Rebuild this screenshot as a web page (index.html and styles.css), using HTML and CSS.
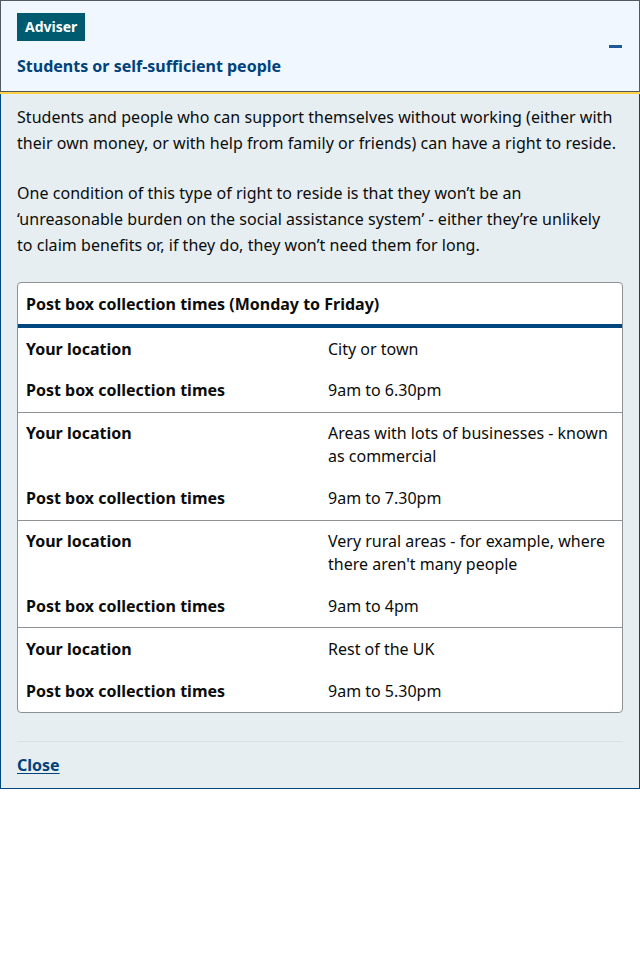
FILE: index.html
```html
<!DOCTYPE html>
<html lang="en">
<head>
<meta charset="utf-8">
<title>Students or self-sufficient people</title>
<link rel="stylesheet" href="styles.css">
</head>
<body>
<div class="panel">
  <div class="panel-header">
    <div class="header-text">
      <span class="badge">Adviser</span>
      <h2 class="title">Students or self-sufficient people</h2>
    </div>
    <span class="minus" aria-hidden="true"></span>
  </div>
  <div class="accent"></div>
  <div class="panel-body">
    <p class="para">Students and people who can support themselves without working (either with their own money, or with help from family or friends) can have a right to reside.</p>
    <p class="para">One condition of this type of right to reside is that they won’t be an ‘unreasonable burden on the social assistance system’ - either they’re unlikely to claim benefits or, if they do, they won’t need them for long.</p>
    <div class="table">
      <div class="table-caption">Post box collection times (Monday to Friday)</div>
      <div class="group">
        <div class="row"><div class="cell key">Your location</div><div class="cell">City or town</div></div>
        <div class="row"><div class="cell key">Post box collection times</div><div class="cell">9am to 6.30pm</div></div>
      </div>
      <div class="group">
        <div class="row"><div class="cell key">Your location</div><div class="cell">Areas with lots of businesses - known as commercial</div></div>
        <div class="row"><div class="cell key">Post box collection times</div><div class="cell">9am to 7.30pm</div></div>
      </div>
      <div class="group">
        <div class="row"><div class="cell key">Your location</div><div class="cell">Very rural areas - for example, where there aren't many people</div></div>
        <div class="row"><div class="cell key">Post box collection times</div><div class="cell">9am to 4pm</div></div>
      </div>
      <div class="group">
        <div class="row"><div class="cell key">Your location</div><div class="cell">Rest of the UK</div></div>
        <div class="row"><div class="cell key">Post box collection times</div><div class="cell">9am to 5.30pm</div></div>
      </div>
    </div>
    <div class="footer">
      <a class="close" href="#">Close</a>
    </div>
  </div>
</div>
</body>
</html>
```
FILE: styles.css
```css
* { box-sizing: border-box; }
html, body { margin: 0; padding: 0; background: #ffffff; }
body {
  font-family: "Noto Sans", "Open Sans", Arial, sans-serif;
  color: #0b0c0c;
  font-size: 16px;
}
.panel { width: 640px; }
.panel-header {
  display: flex;
  align-items: center;
  justify-content: space-between;
  background: #f0f7ff;
  border: 1px solid #505a5f;
  padding: 12px 17px 13px 16px;
}
.header-text { display: flex; flex-direction: column; align-items: flex-start; }
.badge {
  display: inline-block;
  background: #005a70;
  color: #ffffff;
  font-weight: 700;
  font-size: 14px;
  line-height: 28px;
  height: 28px;
  padding: 0 8px;
}
.title {
  margin: 13px 0 0;
  font-size: 16px;
  line-height: 24px;
  font-weight: 700;
  color: #00427a;
}
.minus {
  display: block;
  width: 13px;
  height: 3px;
  background: #1d5a96;
  margin-top: 2px;
}
.accent { height: 2px; background: #ffd147; }
.panel-body {
  background: #e6eef1;
  border: 1px solid #00467f;
  border-top: 0;
  padding: 10px 16px 0;
}
.para {
  margin: 0 6px 24px 0;
  line-height: 26px;
  letter-spacing: 0.04px;
}
.table {
  background: #ffffff;
  border: 1px solid #8e9194;
  border-radius: 4px;
  overflow: hidden;
}
.table-caption {
  font-weight: 700;
  padding: 10px 8px 9px;
  line-height: 22px;
  border-bottom: 4px solid #00467f;
}
.group + .group { border-top: 1px solid #8e9194; }
.row { display: grid; grid-template-columns: 1fr 1fr; }
.cell { padding: 9.6px 8px 9.05px; line-height: 23.2px; }
.key { font-weight: 700; }
.footer {
  margin-top: 28px;
  border-top: 1px solid #d9e0e3;
  padding: 12px 0 12px;
  line-height: 22px;
}
.close {
  color: #00427a;
  font-weight: 700;
  text-decoration: underline;
  text-underline-offset: 2px;
}
```
